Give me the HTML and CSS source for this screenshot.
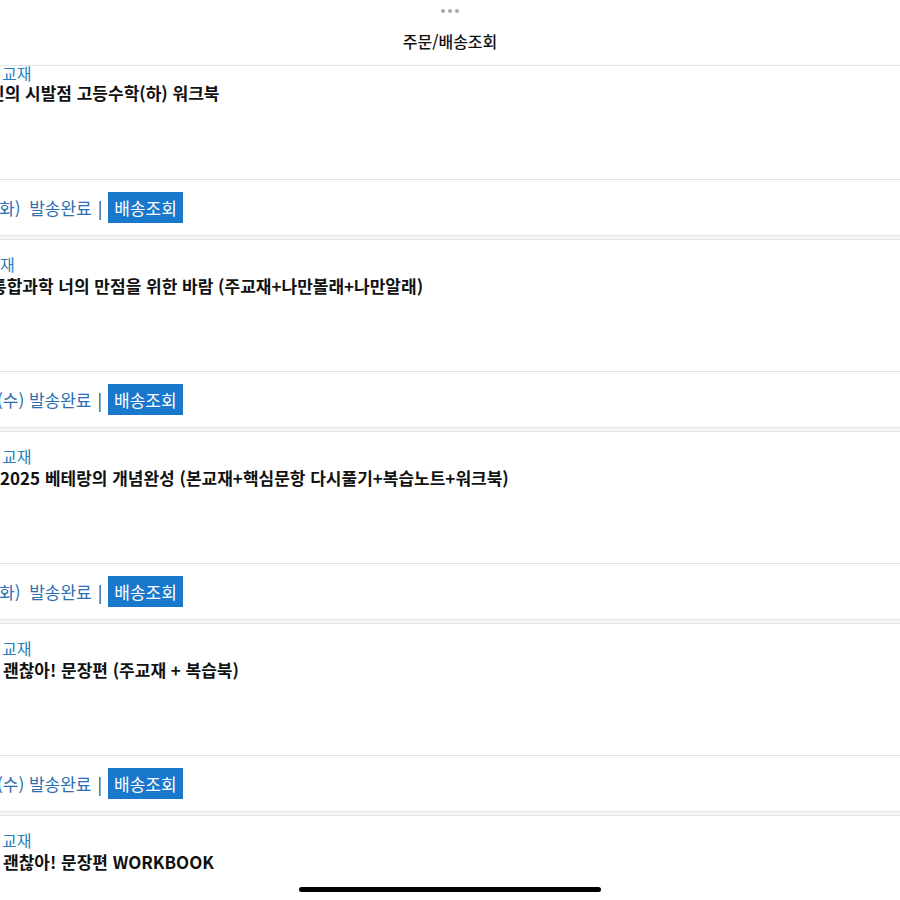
FILE: index.html
```html
<!DOCTYPE html>
<html lang="ko">
<head>
    <meta charset="UTF-8">
    <meta name="viewport" content="width=device-width, initial-scale=1.0">
    <title>주문/배송조회</title>
    <link rel="stylesheet" href="styles.css">
</head>
<body>
    <header class="topbar">
        <div class="grabber"><span></span><span></span><span></span></div>
        <h1 class="topbar-title">주문/배송조회</h1>
    </header>

    <main class="orders">
        <section class="order order-first">
            <div class="order-info">
                <p class="order-cat shift-2">교재</p>
                <p class="order-name shift-11">민의 시발점 고등수학(하) 워크북</p>
            </div>
            <div class="order-status">
                <span class="status-text status-cut">화) 발송완료</span>
                <span class="status-bar">|</span>
                <button type="button" class="track-btn">배송조회</button>
            </div>
        </section>

        <section class="order">
            <div class="order-info">
                <p class="order-cat">재</p>
                <p class="order-name shift-9">통합과학 너의 만점을 위한 바람 (주교재+나만볼래+나만알래)</p>
            </div>
            <div class="order-status">
                <span class="status-text shift-3">(수) 발송완료</span>
                <span class="status-bar">|</span>
                <button type="button" class="track-btn">배송조회</button>
            </div>
        </section>

        <section class="order">
            <div class="order-info">
                <p class="order-cat shift-2">교재</p>
                <p class="order-name">2025 베테랑의 개념완성 (본교재+핵심문항 다시풀기+복습노트+워크북)</p>
            </div>
            <div class="order-status">
                <span class="status-text status-cut">화) 발송완료</span>
                <span class="status-bar">|</span>
                <button type="button" class="track-btn">배송조회</button>
            </div>
        </section>

        <section class="order">
            <div class="order-info">
                <p class="order-cat shift-2">교재</p>
                <p class="order-name shift-3">괜찮아! 문장편 (주교재 + 복습북)</p>
            </div>
            <div class="order-status">
                <span class="status-text shift-3">(수) 발송완료</span>
                <span class="status-bar">|</span>
                <button type="button" class="track-btn">배송조회</button>
            </div>
        </section>

        <section class="order">
            <div class="order-info">
                <p class="order-cat shift-2">교재</p>
                <p class="order-name shift-3">괜찮아! 문장편 WORKBOOK</p>
            </div>
            <div class="order-status">
                <span class="status-text status-cut">화) 발송완료</span>
                <span class="status-bar">|</span>
                <button type="button" class="track-btn">배송조회</button>
            </div>
        </section>
    </main>

    <div class="home-indicator"></div>
</body>
</html>
```

FILE: styles.css
```css
html, body {
    margin: 0;
    padding: 0;
    height: 900px;
    overflow: hidden;
    background: #fff;
}
body {
    font-family: "Noto Sans CJK KR", "Noto Sans", sans-serif;
    color: #111;
}

/* top sheet header */
.topbar {
    height: 65px;
    border-bottom: 1px solid #e3e3e3;
    display: flex;
    flex-direction: column;
    align-items: center;
}
.grabber {
    display: flex;
    gap: 3px;
    margin-top: 9px;
}
.grabber span {
    width: 4px;
    height: 4px;
    border-radius: 50%;
    background: #a9a9a9;
}
.topbar-title {
    margin: 18px 0 0;
    font-size: 16px;
    font-weight: 500;
    line-height: 20px;
    color: #111;
}

/* order list */
.orders {
    background: #f6f6f6;
}
.order {
    background: #fff;
    border-top: 1px solid #e2e2e2;
    border-bottom: 1px solid #e2e2e2;
    margin-bottom: 3px;
}
.order-info {
    height: 117px;
    padding-top: 14px;
    border-bottom: 1px solid #e2e2e2;
    white-space: nowrap;
}
.order-cat {
    margin: 0;
    font-size: 16px;
    line-height: 21px;
    color: #2a7dbd;
}
.order-name {
    margin: 0;
    font-size: 17px;
    font-weight: 700;
    line-height: 21px;
    color: #111;
}

/* first card is scrolled partly under the header */
.order-first {
    border-top: none;
}
.order-first .order-info {
    height: 113px;
    padding-top: 0;
}
.order-first .order-cat {
    line-height: 14px;
    margin-bottom: 2px;
}

.order-status {
    height: 55px;
    display: flex;
    align-items: center;
    gap: 6px;
    white-space: nowrap;
    font-size: 17px;
}
.status-text {
    color: #2b6fb0;
}
.status-cut {
    margin-left: -1px;
    word-spacing: 4px;
}
.status-bar {
    color: #333;
}
.track-btn {
    height: 31px;
    padding: 0 6px;
    border: none;
    border-radius: 0;
    background: #1a78cc;
    color: #fff;
    font-family: inherit;
    font-size: 17px;
    line-height: 31px;
}

.shift-2 { margin-left: 2px; }
.shift-3 { margin-left: -3px; }
.shift-9 { margin-left: -9px; }
.shift-11 { margin-left: -11px; }
.order-name.shift-3 { margin-left: 3px; }

/* iOS home indicator overlays the list */
.home-indicator {
    position: fixed;
    left: 299px;
    top: 887px;
    width: 302px;
    height: 5px;
    border-radius: 3px;
    background: #000;
}
```
